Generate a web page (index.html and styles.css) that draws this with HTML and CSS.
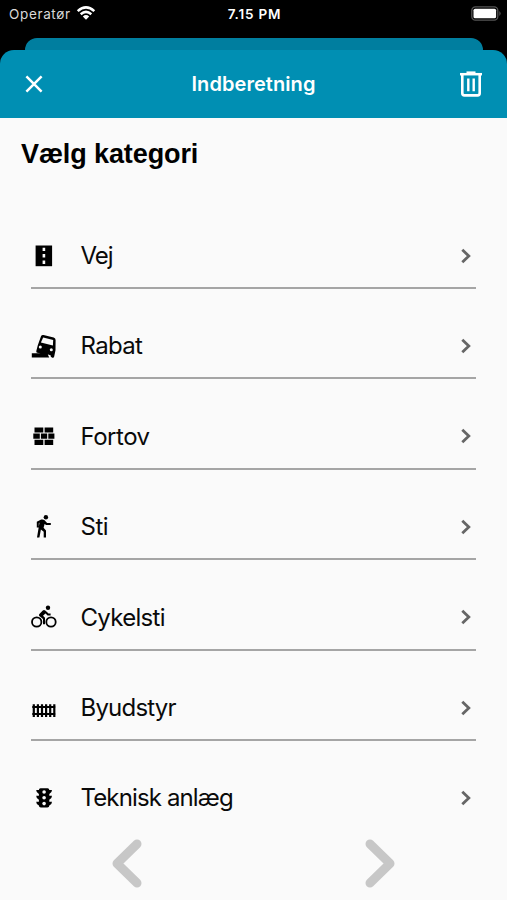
FILE: index.html
```
<!DOCTYPE html>
<html lang="da">
<head>
<meta charset="utf-8">
<title>Indberetning</title>
<link rel="stylesheet" href="styles.css">
</head>
<body>
<div class="phone">
  <div class="status">
    <div class="carrier"><span class="carrier-name">Operatør</span>
      <svg class="wifi" width="20" height="16" viewBox="0 0 20 16"><g fill="none" stroke="#fff" stroke-width="2.5"><path d="M1.7 6.2Q10-1.4 18.3 6.2"/><path d="M4.7 9.3Q10 4.5 15.3 9.3"/></g><path d="M6.8 11.4Q10 8.8 13.2 11.4L10 14.7Z" fill="#fff"/></svg>
    </div>
    <span class="time">7.15 PM</span>
    <svg class="battery" width="30" height="15" viewBox="0 0 30 15"><rect x=".8" y=".8" width="26" height="13.4" rx="3.6" fill="none" stroke="#555" stroke-width="1.3"/><rect x="2.5" y="2.7" width="22.6" height="9.6" rx="1.6" fill="#fff"/><path d="M28.3 5Q31 7.5 28.3 10Z" fill="#555"/></svg>
  </div>
  <div class="sheet-behind"></div>
  <header class="header">
    <svg width="20" height="20" viewBox="0 0 20 20"><path d="M2.4 2.4L17.6 17.6M17.6 2.4L2.4 17.6" fill="none" stroke="#fff" stroke-width="2.5"/></svg>
    <h1 class="header-title">Indberetning</h1>
    <svg width="22" height="26" viewBox="0 0 22 26"><g fill="none" stroke="#fff"><path d="M0 3.2H22" stroke-width="2.5"/><path d="M6.5 1.6H15.5" stroke-width="2.4"/><path d="M2.3 3.5V22.3Q2.3 24.4 4.4 24.4H17.6Q19.7 24.4 19.7 22.3V3.5" stroke-width="2.6"/><path d="M8.3 7.5V20.3M13.7 7.5V20.3" stroke-width="2.4"/></g></svg>
  </header>
  <main class="content">
    <h2 class="heading">Vælg kategori</h2>
    <ul class="list">
      <li class="row">
        <svg class="icon" viewBox="0 0 28 28"><path d="M5.6 3.5H22.1V24.2H5.6Z"/><path d="M12.6 5.7h2.6v3.2h-2.6ZM12.6 12h2.6v3.6h-2.6ZM12.6 18.6h2.6v3.3h-2.6Z" fill="#fafafa"/></svg>
        <span class="label vej">Vej</span>
        <svg class="chevron" viewBox="0 0 12 18"><path d="M2.3 2.8L8.8 9L2.3 15.2"/></svg>
      </li>
      <li class="row">
        <svg class="icon" viewBox="0 0 28 28"><path d="M1.8 21.2H17.2L19.2 25.4H1.8ZM7.8 13.2L11 4.3Q11.7 2.6 13.5 3L23.7 5.4Q25.6 5.9 25.6 8L25.5 18.2L24.2 24.6Q23.8 26.2 22.3 25.7L20.8 24.8L20.6 23.2L17.2 22.2L7.2 20.8Q6 20.5 6.3 19Z"/><path d="M13.2 5.4L23.2 7.9L22.9 13.5L10.9 10.6Z" fill="#fafafa"/><g fill="#fafafa"><circle cx="10.3" cy="15" r="1.5"/><circle cx="21.3" cy="17.8" r="1.5"/></g></svg>
        <span class="label rabat">Rabat</span>
        <svg class="chevron" viewBox="0 0 12 18"><path d="M2.3 2.8L8.8 9L2.3 15.2"/></svg>
      </li>
      <li class="row">
        <svg class="icon" viewBox="0 -1.2 28 28"><path d="M4.5 4.3H13.3V9.4H4.5ZM14.6 4.3H23.2V9.4H14.6ZM3.3 10.4H9.8V15.5H3.3ZM10.9 10.4H17.2V15.5H10.9ZM18.3 10.4H24.4V15.5H18.3ZM4.5 16.6H13.3V21.8H4.5ZM14.6 16.6H23.2V21.8H14.6Z"/></svg>
        <span class="label fortov">Fortov</span>
        <svg class="chevron" viewBox="0 0 12 18"><path d="M2.3 2.8L8.8 9L2.3 15.2"/></svg>
      </li>
      <li class="row">
        <svg class="icon" viewBox="0 -.4 28 28"><circle cx="15.9" cy="3.8" r="2.2"/><path d="M11.2 6.2Q13.2 5.8 14.6 6.8L17.1 9.5L20.8 9.6V11.6H16.1L14.6 10.5L13.6 14.3L16 17.2V24H13.7V18.4L10.9 16L9.4 24H7L9.5 9.2L8.8 9.8V14H6.8V8.3Z"/></svg>
        <span class="label sti">Sti</span>
        <svg class="chevron" viewBox="0 0 12 18"><path d="M2.3 2.8L8.8 9L2.3 15.2"/></svg>
      </li>
      <li class="row">
        <svg class="icon" viewBox="0 -.3 28 28"><g fill="none" stroke="#000" stroke-width="1.8"><circle cx="6.7" cy="18.7" r="4.7"/><circle cx="21" cy="18.7" r="4.7"/></g><circle cx="18" cy="4.5" r="2.2"/><path d="M15.8 9L18 11.2H20.6" fill="none" stroke="#000" stroke-width="2"/><path d="M12.8 7.2Q14 6 15.3 7.3L16.8 9L13 12.4L15 14.4V21H13V15.6L9.3 12.8Q8.5 11.7 9.4 10.7Z"/></svg>
        <span class="label cykelsti">Cykelsti</span>
        <svg class="chevron" viewBox="0 0 12 18"><path d="M2.3 2.8L8.8 9L2.3 15.2"/></svg>
      </li>
      <li class="row">
        <svg class="icon" viewBox="0 -1 28 28"><g fill="none" stroke="#000"><path d="M3.8 9.2V22M7.9 9.2V22M12 9.2V22M16.1 9.2V22M20.2 9.2V22M24.3 9.2V22" stroke-width="2.2"/><path d="M2.3 12.1H25.2M2.3 19H25.2" stroke-width="2"/></g></svg>
        <span class="label byudstyr">Byudstyr</span>
        <svg class="chevron" viewBox="0 0 12 18"><path d="M2.3 2.8L8.8 9L2.3 15.2"/></svg>
      </li>
      <li class="row last">
        <svg class="icon" viewBox="0 -.7 28 28"><path d="M10.5 3.5H17.6Q19.3 3.5 19.3 5.4H22Q22 8.2 19.3 9.4V11.1H22Q22 14 19.3 15.1V17H22Q22 19.7 19.3 20.8Q19.3 22.9 17.3 22.9H10.9Q8.9 22.9 8.9 20.8Q6.2 19.7 6.2 17H8.9V15.1Q6.2 14 6.2 11.1H8.9V9.4Q6.2 8.2 6.2 5.4H8.9Q8.9 3.5 10.5 3.5Z"/><g fill="#fafafa"><circle cx="14.1" cy="7.3" r="1.8"/><circle cx="14.1" cy="13.1" r="1.8"/><circle cx="14.1" cy="18.9" r="1.8"/></g></svg>
        <span class="label teknisk">Teknisk anlæg</span>
        <svg class="chevron" viewBox="0 0 12 18"><path d="M2.3 2.8L8.8 9L2.3 15.2"/></svg>
      </li>
    </ul>
  </main>
  <nav class="pager">
    <svg width="32" height="52" viewBox="0 0 32 52"><path d="M26 6L6 25.5L26 45"/></svg>
    <svg width="32" height="52" viewBox="0 0 32 52"><path d="M6 6L26 25.5L6 45"/></svg>
  </nav>
</div>
</body>
</html>
```
FILE: styles.css
```
* { box-sizing: border-box; }
body { margin: 0; background: #fafafa; color: #0a0a0a; font-family: Inter, sans-serif; }
h1, h2, ul { margin: 0; padding: 0; }
svg { display: block; flex: none; }
.phone {
  width: 507px;
  height: 900px;
  display: flex;
  flex-direction: column;
  overflow: hidden;
  background: linear-gradient(#000 0 118px, #fafafa 118px);
}
.status {
  height: 38px;
  flex: none;
  display: grid;
  grid-template-columns: 1fr auto 1fr;
  align-items: start;
  padding: 5px 6px 0 9px;
  color: #fff;
  font-size: 13px;
  line-height: 18px;
}
.carrier { display: flex; gap: 5px; color: #d8d8d8; }
.carrier-name { font-size: 13.5px; letter-spacing: 0.65px; }
.time { margin-left: -1px; font-size: 13.5px; font-weight: 600; letter-spacing: 0.8px; }
.battery { justify-self: end; margin-top: 1px; }
.sheet-behind {
  height: 12px;
  flex: none;
  margin: 0 24px 0 25px;
  border-radius: 12px 12px 0 0;
  background: #007e9f;
}
.header {
  height: 68px;
  flex: none;
  display: flex;
  align-items: center;
  justify-content: space-between;
  padding: 0 25px 0 24px;
  border-radius: 14px 14px 0 0;
  background: #008fb3;
  color: #fff;
}
.header-title {
  margin-left: 3px;
  font-size: 20px;
  font-weight: 600;
  line-height: 24px;
  letter-spacing: 0.07px;
}
.content { flex: none; padding: 17.6px 31px 0; }
.heading {
  height: 36px;
  margin: 0 0 27px -10px;
  color: #000;
  font: bold 27px/36px "Liberation Sans", sans-serif;
  letter-spacing: -0.1px;
}
.list { list-style: none; }
.row {
  height: 90.4px;
  display: grid;
  grid-template-columns: 49.5px 1fr 12px;
  grid-template-rows: 40px;
  align-items: center;
  padding: 37px 4px 0 0;
  border-bottom: 2px solid #a5a5a5;
}
.last { border: 0; }
.icon { width: 28px; height: 28px; margin-left: -1px; }
.label { padding-top: 1px; font-size: 24px; line-height: 32px; letter-spacing: -0.7px; white-space: nowrap; }
.vej { letter-spacing: -1.1px; }
.fortov, .sti { letter-spacing: -0.5px; }
.byudstyr { letter-spacing: -0.8px; }
.teknisk { letter-spacing: -0.87px; }
.chevron { width: 12px; height: 18px; fill: none; stroke: #666; stroke-width: 2.8; }
.pager { display: flex; justify-content: space-between; padding: 7px 111px 0; }
.pager path { fill: none; stroke: #c7c7c7; stroke-width: 9; stroke-linecap: round; stroke-linejoin: round; }
```
